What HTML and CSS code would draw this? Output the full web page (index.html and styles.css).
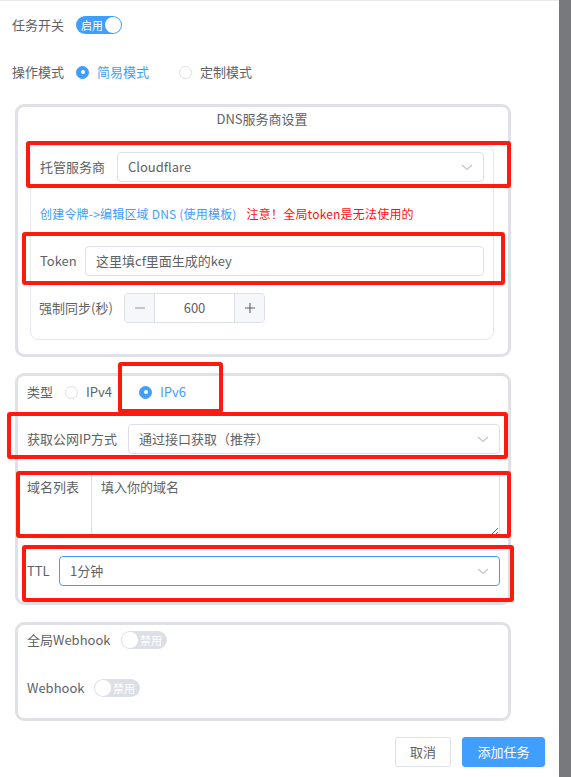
FILE: index.html
```html
<!DOCTYPE html>
<html lang="zh-CN">
<head>
<meta charset="utf-8">
<title>添加任务</title>
<link rel="stylesheet" href="styles.css">
</head>
<body>
<div class="page">
  <div class="content">
    <div class="row">
      <span class="lbl w-top">任务开关</span>
      <span class="switch on"><span class="switch-text">启用</span><span class="knob"></span></span>
    </div>
    <div class="row row-mode">
      <span class="lbl w-top">操作模式</span>
      <span class="radio checked"><span class="dot"></span><span class="radio-text">简易模式</span></span>
      <span class="radio"><span class="dot"></span><span class="radio-text">定制模式</span></span>
    </div>

    <section class="box box-dns">
      <div class="box-title">DNS服务商设置</div>
      <div class="inner">
        <div class="field">
          <span class="lbl w-provider">托管服务商</span>
          <div class="select"><span>Cloudflare</span><svg class="arrow" width="12" height="12" viewBox="0 0 12 12"><polyline points="1,4 6,8.5 11,4" fill="none" stroke="#c0c4cc" stroke-width="1.1"/></svg></div>
        </div>
        <div class="links"><span class="link">创建令牌-&gt;编辑区域 DNS (使用模板)</span><span class="warn">注意！全局token是无法使用的</span></div>
        <div class="field field-token">
          <span class="lbl w-token">Token</span>
          <div class="input">这里填cf里面生成的key</div>
        </div>
        <div class="field field-sync">
          <span class="lbl w-sync">强制同步(秒)</span>
          <div class="number">
            <span class="nbtn minus"><svg width="12" height="12" viewBox="0 0 12 12"><line x1="1" y1="6" x2="11" y2="6" stroke="#909399" stroke-width="1.1"/></svg></span>
            <span class="val">600</span>
            <span class="nbtn plus"><svg width="12" height="12" viewBox="0 0 12 12"><line x1="1" y1="6" x2="11" y2="6" stroke="#606266" stroke-width="1.1"/><line x1="6" y1="1" x2="6" y2="11" stroke="#606266" stroke-width="1.1"/></svg></span>
          </div>
        </div>
      </div>
    </section>

    <section class="box box-ip">
      <div class="row">
        <span class="lbl w-type">类型</span>
        <span class="radio r-ipv4"><span class="dot"></span><span class="radio-text">IPv4</span></span>
        <span class="radio checked"><span class="dot"></span><span class="radio-text">IPv6</span></span>
      </div>
      <div class="field field-ip">
        <span class="lbl w-ip">获取公网IP方式</span>
        <div class="select"><span>通过接口获取（推荐）</span><svg class="arrow" width="12" height="12" viewBox="0 0 12 12"><polyline points="1,4 6,8.5 11,4" fill="none" stroke="#c0c4cc" stroke-width="1.1"/></svg></div>
      </div>
      <div class="field field-domain">
        <span class="lbl w-domain">域名列表</span>
        <textarea class="textarea">填入你的域名</textarea>
      </div>
      <div class="field field-ttl">
        <span class="lbl w-ttl">TTL</span>
        <div class="select focus"><span>1分钟</span><svg class="arrow" width="12" height="12" viewBox="0 0 12 12"><polyline points="1,4 6,8.5 11,4" fill="none" stroke="#c0c4cc" stroke-width="1.1"/></svg></div>
      </div>
    </section>

    <section class="box box-hook">
      <div class="row">
        <span class="lbl w-ghook">全局Webhook</span>
        <span class="switch off"><span class="knob"></span><span class="switch-text">禁用</span></span>
      </div>
      <div class="row row-hook2">
        <span class="lbl w-hook">Webhook</span>
        <span class="switch off"><span class="knob"></span><span class="switch-text">禁用</span></span>
      </div>
    </section>

    <div class="actions">
      <button class="btn btn-cancel">取消</button>
      <button class="btn btn-primary">添加任务</button>
    </div>
  </div>
  <div class="scrollbar"></div>

  <div class="mark m1"></div>
  <div class="mark m2"></div>
  <div class="mark m3"></div>
  <div class="mark m4"></div>
  <div class="mark m5"></div>
  <div class="mark m6"></div>
</div>
</body>
</html>
```
FILE: styles.css
```css
* { box-sizing: border-box; }
html, body { margin: 0; padding: 0; background: #fff; }
body {
  font-family: "Noto Sans CJK SC", "Noto Sans", sans-serif;
  font-size: 13px;
  color: #606266;
}
.page { position: relative; display: flex; width: 571px; height: 777px; overflow: hidden; }
.content { width: 559px; border-top: 1px solid #e9eaee; padding: 15px 14px 0 12px; }
.scrollbar { width: 12px; background: #77797d; }

.row { display: flex; align-items: center; height: 18px; line-height: 18px; }
.row-mode { margin-top: 29px; }
.lbl { flex: none; line-height: 18px; white-space: nowrap; }
.w-top { width: 64px; }
.w-provider { width: 77px; }
.w-token { width: 45px; }
.w-sync { width: 85px; margin-left: -1px; }
.w-type { width: 38px; }
.w-ip { width: 101px; }
.w-domain { width: 64px; align-self: flex-start; padding-top: 6px; }
.w-ttl { width: 32px; }
.w-ghook { width: 94px; }
.w-hook { width: 67px; }

/* switch */
.switch { display: inline-flex; align-items: center; width: 46px; height: 18px; border-radius: 9px; padding: 0 1px; background: #409eff; }
.switch .knob { width: 16px; height: 16px; border-radius: 50%; background: #fff; flex: none; }
.switch-text { font-size: 11px; color: #fff; line-height: 18px; }
.switch.on .switch-text { margin-left: 4px; }
.switch.on .knob { margin-left: auto; }
.switch.off { background: #dcdfe6; }
.switch.off .switch-text { margin-left: 2px; }

/* radio */
.radio { display: inline-flex; align-items: center; margin-right: 30px; }
.radio .dot { width: 13px; height: 13px; border-radius: 50%; border: 1px solid #dcdfe6; background: #fff; display: flex; align-items: center; justify-content: center; flex: none; }
.radio.checked .dot { background: #409eff; border-color: #409eff; }
.radio.checked .dot::after { content: ""; width: 4px; height: 4px; border-radius: 50%; background: #fff; }
.radio-text { margin-left: 8px; }
.radio.checked .radio-text { color: #409eff; }
.r-ipv4 { margin-right: 27px; }

/* boxes */
.box { margin-left: 3px; width: 496px; border: 3px solid #dfe1e6; border-radius: 9px; }
.box-dns { margin-top: 23px; padding: 3px 14px 14px 12px; }
.box-title { text-align: center; line-height: 18px; }
.inner { margin-top: 17px; border: 1px solid #e6e8eb; border-radius: 8px; padding: 6px 9px 16px 9px; }

.field { display: flex; align-items: center; }
.select, .input {
  flex: 1; height: 30px; border: 1px solid #dcdfe6; border-radius: 4px;
  padding: 0 10px; display: flex; align-items: center; line-height: 18px; color: #606266;
}
.select .arrow { margin-left: auto; flex: none; }
.select.focus { border-color: #409eff; }

.links { margin-top: 23px; line-height: 18px; font-size: 12px; white-space: nowrap; }
.link { color: #409eff; letter-spacing: 0.2px; }
.warn { color: #ff1010; margin-left: 10px; letter-spacing: 0.2px; }
.field-token { margin-top: 23px; }
.field-sync { margin-top: 17px; }

.number { display: flex; width: 141px; height: 30px; border: 1px solid #dcdfe6; border-radius: 4px; overflow: hidden; }
.nbtn { width: 30px; flex: none; background: #f5f7fa; display: flex; align-items: center; justify-content: center; }
.minus { border-right: 1px solid #dcdfe6; }
.plus { border-left: 1px solid #dcdfe6; }
.val { flex: 1; text-align: center; line-height: 28px; color: #606266; }

.box-ip { margin-top: 16px; padding: 7px 8px 16px 9px; }
.field-ip { margin-top: 23px; }
.field-domain { margin-top: 18px; }
.textarea {
  flex: 1; height: 65px; margin: 0; border: 1px solid #dcdfe6; border-radius: 4px;
  padding: 5px 9px; font: inherit; font-size: 13px; line-height: 18px; color: #606266; resize: vertical; outline: none;
}
.field-ttl { margin-top: 19px; }

.box-hook { margin-top: 17px; padding: 6px 9px 21px 9px; }
.row-hook2 { margin-top: 30px; }

.actions { margin-top: 16px; display: flex; justify-content: flex-end; gap: 11px; }
.btn { height: 30px; border-radius: 3px; font: inherit; font-size: 13px; padding: 0; line-height: 28px; }
.btn-cancel { width: 56px; border: 1px solid #dcdfe6; background: #fff; color: #606266; }
.btn-primary { width: 83px; border: 1px solid #409eff; background: #409eff; color: #fff; }

/* red annotation overlays */
.mark { position: absolute; border: 4px solid #ff1a0e; border-radius: 3px; pointer-events: none; }
.m1 { left: 26px; top: 141px; width: 485px; height: 47px; }
.m2 { left: 22px; top: 232px; width: 483px; height: 53px; }
.m3 { left: 118px; top: 362px; width: 105px; height: 51px; }
.m4 { left: 7px; top: 412px; width: 501px; height: 47px; }
.m5 { left: 16px; top: 471px; width: 495px; height: 67px; }
.m6 { left: 22px; top: 545px; width: 492px; height: 57px; }
```
